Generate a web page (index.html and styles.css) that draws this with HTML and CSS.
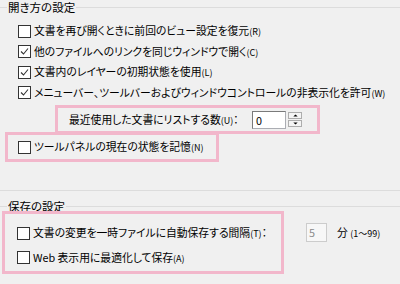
FILE: index.html
```html
<!DOCTYPE html>
<html lang="ja">
<head>
    <meta charset="UTF-8">
    <title>開き方の設定</title>
    <link rel="stylesheet" href="styles.css">
</head>
<body>

    <div class="group group-open">
        <div class="legend">開き方の設定</div>

        <div class="row">
            <span class="check"></span>
            <span class="label">文書を再び開くときに前回のビュー設定を復元<small>(R)</small></span>
        </div>
        <div class="row">
            <span class="check checked"><svg viewBox="0 0 11 11"><path d="M2 5.5 L4.5 8 L9 2.5" /></svg></span>
            <span class="label">他のファイルへのリンクを同じウィンドウで開く<small>(C)</small></span>
        </div>
        <div class="row">
            <span class="check checked"><svg viewBox="0 0 11 11"><path d="M2 5.5 L4.5 8 L9 2.5" /></svg></span>
            <span class="label">文書内のレイヤーの初期状態を使用<small>(L)</small></span>
        </div>
        <div class="row">
            <span class="check checked"><svg viewBox="0 0 11 11"><path d="M2 5.5 L4.5 8 L9 2.5" /></svg></span>
            <span class="label">メニューバー、ツールバーおよびウィンドウコントロールの非表示化を許可<small>(W)</small></span>
        </div>

        <div class="mark mark-recent">
            <span class="label">最近使用した文書にリストする数<small>(U)</small>：</span>
            <span class="field">0</span>
            <span class="spin">
                <span class="spin-btn"><svg viewBox="0 0 7 4"><path d="M0.5 3.5 L3.5 0.5 L6.5 3.5 Z" /></svg></span>
                <span class="spin-btn"><svg viewBox="0 0 7 4"><path d="M0.5 0.5 L3.5 3.5 L6.5 0.5 Z" /></svg></span>
            </span>
        </div>

        <div class="mark mark-panel">
            <span class="check"></span>
            <span class="label">ツールパネルの現在の状態を記憶<small>(N)</small></span>
        </div>
    </div>

    <div class="group group-save">
        <div class="legend">保存の設定</div>

        <div class="save-line">
            <div class="mark mark-save">
                <div class="row">
                    <span class="check"></span>
                    <span class="label">文書の変更を一時ファイルに自動保存する間隔<small>(T)</small>：</span>
                </div>
                <div class="row">
                    <span class="check"></span>
                    <span class="label">Web 表示用に最適化して保存<small>(A)</small></span>
                </div>
            </div>
            <div class="interval">
                <span class="field disabled">5</span>
                <span class="label">分 <small>(1～99)</small></span>
            </div>
        </div>
    </div>

</body>
</html>
```

FILE: styles.css
```css
body {
    margin: 0;
    padding: 0;
    width: 400px;
    height: 284px;
    overflow: hidden;
    background: #f0f0f0;
    color: #000;
    font-family: "Noto Sans CJK JP", "Noto Sans", sans-serif;
    font-size: 10.8px;
    font-feature-settings: "palt";
}
.group {
    border-top: 1px solid #dcdcdc;
}
.group-open {
    margin-top: 7px;
    height: 182px;
    border-bottom: 1px solid #dcdcdc;
}
.group-save {
    margin-top: 15px;
}
.legend {
    width: fit-content;
    margin: -8px 0 0 7px;
    padding: 0 1px;
    line-height: 15px;
    font-size: 11.5px;
    background: #f0f0f0;
}
.group-open .legend {
    margin-bottom: 6px;
}
.row {
    display: flex;
    align-items: center;
    height: 20.5px;
    padding-left: 18px;
}
.check {
    flex: none;
    width: 11px;
    height: 11px;
    border: 1px solid #333;
    background: #fff;
    margin-right: 3px;
}
.check svg {
    display: block;
    width: 11px;
    height: 11px;
    fill: none;
    stroke: #333;
    stroke-width: 1.1;
}
.label {
    white-space: nowrap;
    line-height: 14px;
}
small {
    font-size: 9px;
}
.mark {
    border: 3px solid #f2b7cb;
}
.mark-recent {
    display: flex;
    align-items: center;
    width: 233px;
    height: 23px;
    margin: 2px 0 0 55px;
    padding: 0 15px 0 11px;
}
.mark-recent .label {
    flex: 1;
}
.field {
    flex: none;
    box-sizing: border-box;
    width: 34px;
    height: 18px;
    padding-left: 3px;
    border: 1px solid #abadb3;
    border-top-color: #7a7a7a;
    border-left-color: #7a7a7a;
    background: #fff;
    line-height: 16px;
}
.spin {
    display: flex;
    flex-direction: column;
    gap: 1px;
    margin-left: 2px;
}
.spin-btn {
    box-sizing: border-box;
    width: 14px;
    height: 7px;
    border: 1px solid #adadad;
    background: #f4f4f4;
    display: flex;
    align-items: center;
    justify-content: center;
}
.spin-btn svg {
    width: 5px;
    height: 3px;
    fill: #000;
}
.mark-panel {
    display: flex;
    align-items: center;
    width: 198px;
    height: 24px;
    margin: -2px 0 0 5px;
    padding-left: 10px;
}
.save-line {
    display: flex;
    align-items: flex-start;
    margin-top: -3px;
}
.mark-save {
    width: 276px;
    height: 49px;
    margin-left: 2px;
    padding-top: 8px;
}
.mark-save .row {
    height: 27px;
    padding-left: 12px;
}
.mark-save .row:first-child {
    height: 22px;
}
.interval {
    display: flex;
    align-items: center;
    margin: 12px 0 0 22px;
}
.field.disabled {
    width: 21px;
    height: 19px;
    margin-right: 10px;
    padding-left: 2px;
    border-color: #cccccc;
    color: #8a8a8a;
    background: #f7f7f7;
}
```
